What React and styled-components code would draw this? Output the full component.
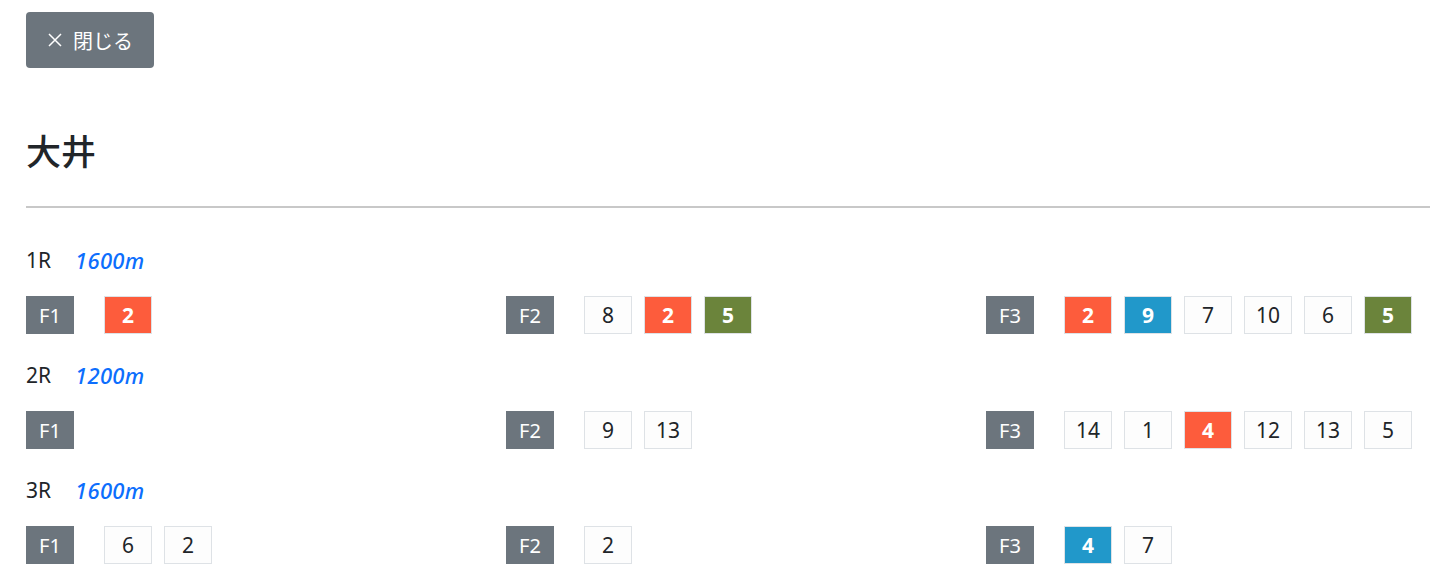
import React from 'react'
import styled, { createGlobalStyle } from 'styled-components'

const GlobalStyle = createGlobalStyle`
  body {
    margin: 0;
    background: #fff;
    color: #212529;
    font-family: "Noto Sans", "Noto Sans CJK JP", sans-serif;
    overflow: hidden;
  }
`

const Page = styled.div`
  padding: 12px 15px 0 26px;
`

const CloseButton = styled.button`
  display: flex;
  align-items: center;
  gap: 10px;
  height: 56px;
  padding: 0 21px 0 21px;
  border: none;
  border-radius: 4px;
  background: #6c757d;
  color: #fff;
  font-family: "Noto Sans CJK JP", sans-serif;
  font-size: 20px;
  cursor: pointer;
`

const Title = styled.h2`
  margin: 62px 0 0;
  font-family: "Noto Sans CJK JP", sans-serif;
  font-size: 35px;
  font-weight: 500;
  line-height: 40px;
`

const Rule = styled.div`
  height: 2px;
  background: #c8c8c8;
  margin-top: 36px;
  margin-bottom: 37px;
`

const Race = styled.section`
  margin-bottom: 26px;
`

const RaceHead = styled.div`
  display: flex;
  align-items: center;
  gap: 24px;
  height: 30px;
  margin-bottom: 21px;
  font-size: 21px;
`

const Distance = styled.span`
  color: #0d6efd;
  font-style: italic;
  font-weight: 500;
  font-size: 22px;
  letter-spacing: 0.3px;
`

const Forecasts = styled.div`
  display: grid;
  grid-template-columns: repeat(3, 480px);
`

const Forecast = styled.div`
  display: flex;
  gap: 12px;
`

const Label = styled.div`
  width: 48px;
  height: 38px;
  margin-right: 18px;
  display: flex;
  align-items: center;
  justify-content: center;
  background: #6c757d;
  color: #fff;
  font-size: 20px;
`

const colors = {
  red: '#fd5c3c',
  blue: '#2198ca',
  green: '#6b843b',
}

const Num = styled.div`
  box-sizing: border-box;
  width: 48px;
  height: 38px;
  display: flex;
  align-items: center;
  justify-content: center;
  border: 1px solid #dee2e6;
  background: ${p => (p.$tone ? colors[p.$tone] : '#fdfdfd')};
  color: ${p => (p.$tone ? '#fff' : '#212529')};
  font-weight: ${p => (p.$tone ? 700 : 400)};
  font-size: 21px;
`

const races = [
  {
    no: '1R', dist: '1600m',
    f: [
      [['2', 'red']],
      [['8'], ['2', 'red'], ['5', 'green']],
      [['2', 'red'], ['9', 'blue'], ['7'], ['10'], ['6'], ['5', 'green']],
    ],
  },
  {
    no: '2R', dist: '1200m',
    f: [
      [],
      [['9'], ['13']],
      [['14'], ['1'], ['4', 'red'], ['12'], ['13'], ['5']],
    ],
  },
  {
    no: '3R', dist: '1600m',
    f: [
      [['6'], ['2']],
      [['2']],
      [['4', 'blue'], ['7']],
    ],
  },
]

const App = () => (
  <Page>
    <GlobalStyle />
    <CloseButton type="button">
      <svg width="16" height="16" viewBox="0 0 16 16" fill="none" stroke="#fff" strokeWidth="1.5">
        <path d="M2 2L14 14M14 2L2 14" />
      </svg>
      閉じる
    </CloseButton>
    <Title>大井</Title>
    <Rule />
    {races.map(r => (
      <Race key={r.no}>
        <RaceHead>
          <span>{r.no}</span>
          <Distance>{r.dist}</Distance>
        </RaceHead>
        <Forecasts>
          {r.f.map((nums, i) => (
            <Forecast key={i}>
              <Label>F{i + 1}</Label>
              {nums.map(([n, tone], j) => (
                <Num key={j} $tone={tone}>{n}</Num>
              ))}
            </Forecast>
          ))}
        </Forecasts>
      </Race>
    ))}
  </Page>
)

export default App
